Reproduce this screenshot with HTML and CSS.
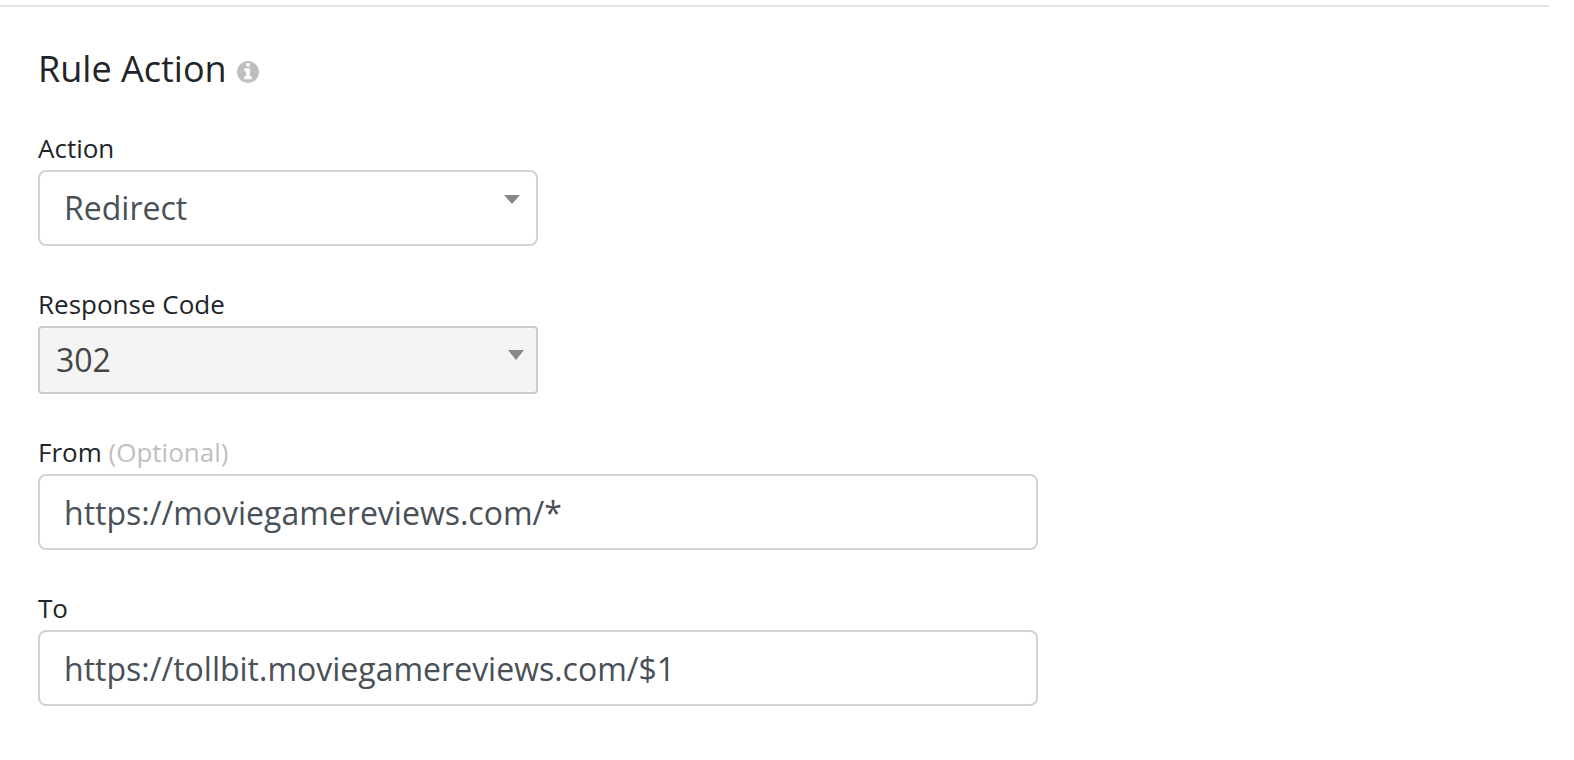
FILE: index.html
```
<!DOCTYPE html>
<html lang="en">
<head>
<meta charset="utf-8">
<title>Rule Action</title>
<link rel="stylesheet" href="styles.css">
</head>
<body>
<hr class="divider">
<form class="rule">
  <h2 class="title">Rule Action
    <svg class="info" viewBox="0 128 1536 1536" aria-hidden="true"><path fill="#bfbfbf" d="M1024 1376v-160q0-14-9-23t-23-9h-96v-512q0-14-9-23t-23-9h-320q-14 0-23 9t-9 23v160q0 14 9 23t23 9h96v320h-96q-14 0-23 9t-9 23v160q0 14 9 23t23 9h448q14 0 23-9t9-23zm-128-896v-160q0-14-9-23t-23-9h-192q-14 0-23 9t-9 23v160q0 14 9 23t23 9h192q14 0 23-9t9-23zm640 416q0 209-103 385.5t-279.5 279.5-385.5 103-385.5-103-279.5-279.5-103-385.5 103-385.5 279.5-279.5 385.5-103 385.5 103 279.5 279.5 103 385.5z"/></svg>
  </h2>
  <div class="field short">
    <label for="action">Action</label>
    <div class="picker">
      <select id="action" class="control"><option>Redirect</option></select>
      <svg class="arrow" viewBox="0 0 16 9" aria-hidden="true"><path fill="#888" d="M0 0h16L8 9z"/></svg>
    </div>
  </div>
  <div class="field short">
    <label for="code">Response Code</label>
    <div class="picker">
      <select id="code" class="control muted"><option>302</option></select>
      <svg class="arrow arrow-muted" viewBox="0 0 16 10" aria-hidden="true"><path fill="#888" d="M0 0h16L8 10z"/></svg>
    </div>
  </div>
  <div class="field">
    <label for="from">From <span class="optional">(Optional)</span></label>
    <input id="from" class="control" type="text" value="https://moviegamereviews.com/*">
  </div>
  <div class="field">
    <label for="to">To</label>
    <input id="to" class="control" type="text" value="https://tollbit.moviegamereviews.com/$1">
  </div>
</form>
</body>
</html>
```
FILE: styles.css
```
* { box-sizing: border-box; }
body {
  margin: 0;
  background: #fff;
  color: #212529;
  font-family: "Open Sans", sans-serif;
}
.divider {
  margin: 5px 25px 0 0;
  border: 0;
  border-top: 2px solid #e5e5e5;
}
.rule { padding: 36px 38px 0; }
.title {
  display: flex;
  align-items: center;
  gap: 10px;
  margin: 0 0 37px;
  font-size: 36px;
  line-height: 52px;
  font-weight: 400;
}
.info { width: 22px; height: 22px; margin-top: 5px; }
.field {
  max-width: 1000px;
  margin-bottom: 42px;
}
.short { max-width: 500px; }
label {
  display: block;
  font-size: 26px;
  line-height: 32px;
  margin-bottom: 6px;
}
.optional { color: #bfbfbf; }
.picker { position: relative; }
.control {
  display: block;
  appearance: none;
  width: 100%;
  height: 76px;
  padding: 0 24px;
  border: 2px solid #ced4da;
  border-radius: 8px;
  background: #fff;
  color: #495057;
  font: 32px "Open Sans", sans-serif;
}
select.control { padding-bottom: 2px; }
.muted {
  height: 68px;
  padding: 0 16px;
  border-color: #ccc;
  border-radius: 4px;
  background: #f4f4f4;
  color: #444;
}
.arrow {
  position: absolute;
  top: 25px;
  right: 18px;
  width: 16px;
  height: 9px;
  pointer-events: none;
}
.arrow-muted { top: 24px; right: 14px; height: 10px; }
```
